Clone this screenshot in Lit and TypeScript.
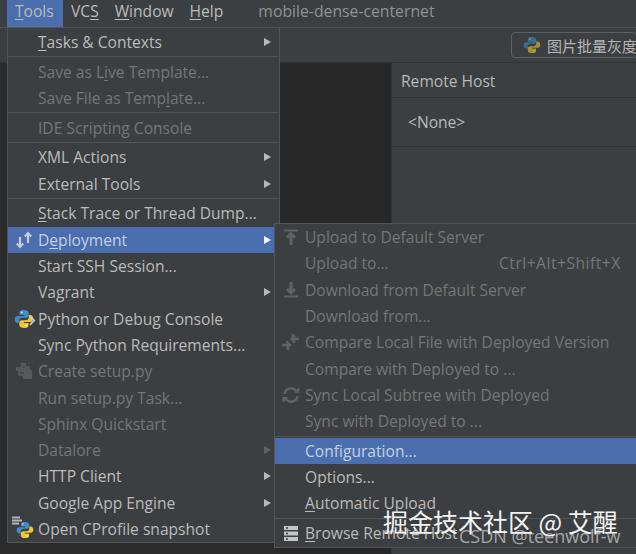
import { LitElement, html, css, svg } from "lit";
import { customElement } from "lit/decorators.js";

const py = (dim = false) => html`<svg class=${dim ? "ico dimmed" : "ico"} viewBox="0 0 20 20" width="20" height="20">
  <path d="M9.8 1C6 1 5.5 2.4 5.5 4v2h4.7v1H3.6C1.8 7 .8 8.4.8 10.4c0 2.1 1 3.6 2.8 3.6h1.6v-2.3c0-1.7 1.4-3 3-3h4c1.4 0 2.5-1.1 2.5-2.5V4c0-1.6-1.6-3-4.9-3z" fill="#3f8cc9"/>
  <circle cx="7.6" cy="3.4" r=".9" fill="#dfeaf3"/>
  <path d="M10.2 19c3.8 0 4.3-1.4 4.3-3v-2H9.8v-1h6.6c1.8 0 2.8-1.4 2.8-3.4 0-2.1-1-3.6-2.8-3.6h-1.6v2.3c0 1.7-1.4 3-3 3h-4c-1.4 0-2.5 1.1-2.5 2.5V16c0 1.6 1.6 3 4.9 3z" fill="#f2c62e"/>
  <circle cx="12.4" cy="16.6" r=".9" fill="#fff6d0"/>
</svg>`;

const icons: Record<string, any> = {
  python: html`<span class="stack">${py()}<svg class="badge" viewBox="0 0 8 12" width="7" height="11"><path d="M1 1l5 5-5 5" fill="none" stroke="#c8c8c8" stroke-width="2"/></svg></span>`,
  profile: html`<span class="stack"><svg class="lines" viewBox="0 0 11 11" width="11" height="11"><path d="M0 1.5h8M0 4.5h10M0 7.5h7" stroke="#b4b4b4" stroke-width="2"/></svg><span class="shift">${py()}</span></span>`,
  deploy: svg`<svg class="ico" viewBox="0 0 20 20" width="20" height="20"><path d="M6 17V7M2.8 13.6L6 17l3.2-3.4M14 3v10M10.8 6.4L14 3l3.2 3.4" fill="none" stroke="#c5ccd8" stroke-width="2.2"/></svg>`,
  setup: svg`<svg class="ico" viewBox="0 0 20 20" width="20" height="20"><path d="M7 2h5v3h4v4h2v9H9v-3H4v-5H2V6h5z" fill="#565859"/><path d="M8 6h3M6 12h4" stroke="#464849" stroke-width="1.5"/></svg>`,
  up: svg`<svg class="ico" viewBox="0 0 20 20" width="20" height="20"><path d="M3 3.5h14" stroke="#5f6162" stroke-width="2"/><path d="M10 18V7M6 10.5l4-4 4 4" fill="none" stroke="#5f6162" stroke-width="3"/></svg>`,
  down: svg`<svg class="ico" viewBox="0 0 20 20" width="20" height="20"><path d="M3 16.5h14" stroke="#5f6162" stroke-width="2"/><path d="M10 2v10M6 9l4 4 4-4" fill="none" stroke="#5f6162" stroke-width="3"/></svg>`,
  compare: svg`<svg class="ico" viewBox="0 0 20 20" width="20" height="20"><path d="M1 13h7M5.5 9.5L9 13l-3.5 3.5M18 7h-7M14 3.5L10.5 7 14 10.5M7 18v-4M12 7V2" fill="none" stroke="#5f6162" stroke-width="2.4"/></svg>`,
  sync: svg`<svg class="ico" viewBox="0 0 20 20" width="20" height="20"><path d="M3.5 9a6.5 6.5 0 0 1 12-2.5M16.5 11a6.5 6.5 0 0 1-12 2.5" fill="none" stroke="#5f6162" stroke-width="2.4"/><path d="M12.5 8h6V2zM7.5 12h-6v6z" fill="#5f6162"/></svg>`,
  servers: svg`<svg class="ico" viewBox="0 0 20 20" width="20" height="20"><path d="M3 3h14v4H3zM3 8.5h14v4H3zM3 14h14v4H3z" fill="#c3c6c9"/><path d="M5 5h2M5 10.5h2M5 16h2" stroke="#3c3f41" stroke-width="1.4"/></svg>`,
};

type Row = { t: any; dis?: boolean; sub?: boolean; sel?: boolean; icon?: string; short?: string };

const mainGroups: Row[][] = [
  [{ t: html`<u>T</u>asks &amp; Contexts`, sub: true }],
  [
    { t: html`Save as L<u>i</u>ve Template...`, dis: true },
    { t: html`Save File as Temp<u>l</u>ate...`, dis: true },
  ],
  [{ t: "IDE Scripting Console", dis: true }],
  [
    { t: "XML Actions", sub: true },
    { t: "External Tools", sub: true },
  ],
  [
    { t: html`<u>S</u>tack Trace or Thread Dump...` },
    { t: html`D<u>e</u>ployment`, sub: true, sel: true, icon: "deploy" },
    { t: "Start SSH Session..." },
    { t: "Vagrant", sub: true },
    { t: "Python or Debug Console", icon: "python" },
    { t: "Sync Python Requirements..." },
    { t: "Create setup.py", dis: true, icon: "setup" },
    { t: "Run setup.py Task...", dis: true },
    { t: "Sphinx Quickstart", dis: true },
    { t: "Datalore", dis: true, sub: true },
    { t: "HTTP Client", sub: true },
    { t: "Google App Engine", sub: true },
    { t: "Open CProfile snapshot", icon: "profile" },
  ],
];

const subGroups: Row[][] = [
  [
    { t: "Upload to Default Server", dis: true, icon: "up" },
    { t: "Upload to...", dis: true, short: "Ctrl+Alt+Shift+X" },
    { t: "Download from Default Server", dis: true, icon: "down" },
    { t: "Download from...", dis: true },
    { t: "Compare Local File with Deployed Version", dis: true, icon: "compare" },
    { t: "Compare with Deployed to ...", dis: true },
    { t: "Sync Local Subtree with Deployed", dis: true, icon: "sync" },
    { t: "Sync with Deployed to ...", dis: true },
  ],
  [
    { t: "Configuration...", sel: true },
    { t: "Options..." },
    { t: html`<u>A</u>utomatic Upload` },
  ],
  [{ t: html`<u>B</u>rowse Remote Host`, icon: "servers" }],
];

@customElement("app-root")
export class AppRoot extends LitElement {
  static styles = css`
    :host {
      display: block;
      position: relative;
      width: 636px;
      height: 554px;
      overflow: hidden;
      background: #3c3f41;
      font-family: "Open Sans", "Noto Sans CJK SC", sans-serif;
      font-size: 15.6px;
      color: #bbbbbb;
    }
    u { text-underline-offset: 2px; }
    .menubar {
      display: flex;
      height: 27px;
      border-bottom: 1px solid #525455;
      padding-left: 7px;
      align-items: stretch;
      line-height: 22px;
      box-sizing: content-box;
    }
    .top { padding: 0 8px; }
    .top.on { background: #4b6eaf; width: 48px; padding: 0 0 0 8px; }
    .title { margin-left: 27px; color: #8f9293; font-size: 15.75px; }
    .toolbar {
      height: 34px;
      border-bottom: 1px solid #323232;
      display: flex;
      justify-content: flex-end;
      align-items: center;
    }
    .runbtn {
      width: 126px;
      height: 26px;
      margin-right: -1px;
      border: 1px solid #5e6162;
      border-radius: 4px;
      box-sizing: border-box;
      display: flex;
      align-items: center;
      gap: 6px;
      padding-left: 11px;
      white-space: nowrap;
      overflow: hidden;
      color: #b4b6b7;
      font-size: 15px;
    }
    .runbtn .ico { width: 18px; height: 18px; opacity: 0.6; flex: none; }
    .body { display: flex; height: 491px; }
    .left { width: 280px; background: #2b2b2b; }
    .editor { width: 111px; background: #272727; border-right: 1px solid #323334; }
    .panel { flex: 1; display: flex; flex-direction: column; }
    .phead { height: 34px; line-height: 37px; padding-left: 9px; border-bottom: 1px solid #313335; color: #b6b8b9; }
    .pitem { height: 48px; line-height: 49px; padding-left: 16px; border-bottom: 1px solid #313335; color: #b6b8b9; }
    .pfill { height: 76px; border-bottom: 1px solid #525455; }

    .menu {
      position: absolute;
      background: #3c3f41;
      border: 1px solid #525455;
      box-sizing: border-box;
      line-height: 26px;
    }
    .main { left: 7px; top: 27px; width: 273px; height: 516px; }
    .sub { left: 274px; top: 223px; width: 380px; height: 325px; }
    .group { border-bottom: 1px solid #525455; padding: 1.2px 0; }
    .group:last-child { border-bottom: none; }
    .main .group:first-child { padding-top: 1px; }
    .sub .group:first-child { padding-top: 0; }
    .row {
      height: 26.3px;
      display: flex;
      align-items: center;
      position: relative;
      white-space: nowrap;
    }
    .slot { width: 30px; flex: none; display: flex; align-items: center; justify-content: center; padding-left: 1px; box-sizing: border-box; }
    .lab { flex: 1; }
    .row.dis { color: #747677; }
    .row.dis u { text-decoration-color: #777; }
    .row.sel { background: #4b6eaf; color: #c5d0e2; }
    .arrow {
      width: 0; height: 0;
      margin-right: 8px;
      border-left: 7px solid #b6b8ba;
      border-top: 4.5px solid transparent;
      border-bottom: 4.5px solid transparent;
    }
    .row.sel .arrow { border-left-color: #f2f4f8; }
    .row.dis .arrow { border-left-color: #5d6062; }
    .short { position: absolute; left: 224px; color: #747677; letter-spacing: 0.5px; }
    .sub .row { width: 100%; }
    .ico { display: block; }
    .stack { position: relative; display: block; width: 20px; height: 20px; }
    .badge { position: absolute; right: -2px; top: 6px; }
    .lines { position: absolute; left: -2px; top: -3px; }
    .shift { position: absolute; left: 2px; top: 2px; }
    .shift .ico { width: 18px; height: 18px; }
    .mark {
      position: absolute;
      left: 383px;
      top: 504px;
      font-family: "Noto Sans CJK SC", sans-serif;
      font-size: 25px;
      line-height: 34px;
      color: #f4f4f4;
      white-space: nowrap;
    }
    .csdn {
      position: absolute;
      left: 459px;
      top: 524px;
      font-size: 18px;
      line-height: 24px;
      color: rgba(255, 255, 255, 0.55);
      white-space: nowrap;
    }
  `;

  private row(r: Row) {
    const cls = `row${r.dis ? " dis" : ""}${r.sel ? " sel" : ""}`;
    return html`<div class=${cls}>
      <span class="slot">${r.icon ? icons[r.icon] : ""}</span>
      <span class="lab">${r.t}</span>
      ${r.short ? html`<span class="short">${r.short}</span>` : ""}
      ${r.sub ? html`<span class="arrow"></span>` : ""}
    </div>`;
  }

  render() {
    return html`
      <div class="menubar">
        <span class="top on"><u>T</u>ools</span>
        <span class="top">VC<u>S</u></span>
        <span class="top"><u>W</u>indow</span>
        <span class="top"><u>H</u>elp</span>
        <span class="title">mobile-dense-centernet</span>
      </div>
      <div class="toolbar">
        <div class="runbtn">${py(true)}<span>图片批量灰度化</span></div>
      </div>
      <div class="body">
        <div class="left"></div>
        <div class="editor"></div>
        <div class="panel">
          <div class="phead">Remote Host</div>
          <div class="pitem">&lt;None&gt;</div>
          <div class="pfill"></div>
        </div>
      </div>
      <div class="menu main">
        ${mainGroups.map((g) => html`<div class="group">${g.map((r) => this.row(r))}</div>`)}
      </div>
      <div class="menu sub">
        ${subGroups.map((g) => html`<div class="group">${g.map((r) => this.row(r))}</div>`)}
      </div>
      <div class="csdn">CSDN @teenwolf-w</div>
      <div class="mark">掘金技术社区 @ 艾醒</div>
    `;
  }
}
